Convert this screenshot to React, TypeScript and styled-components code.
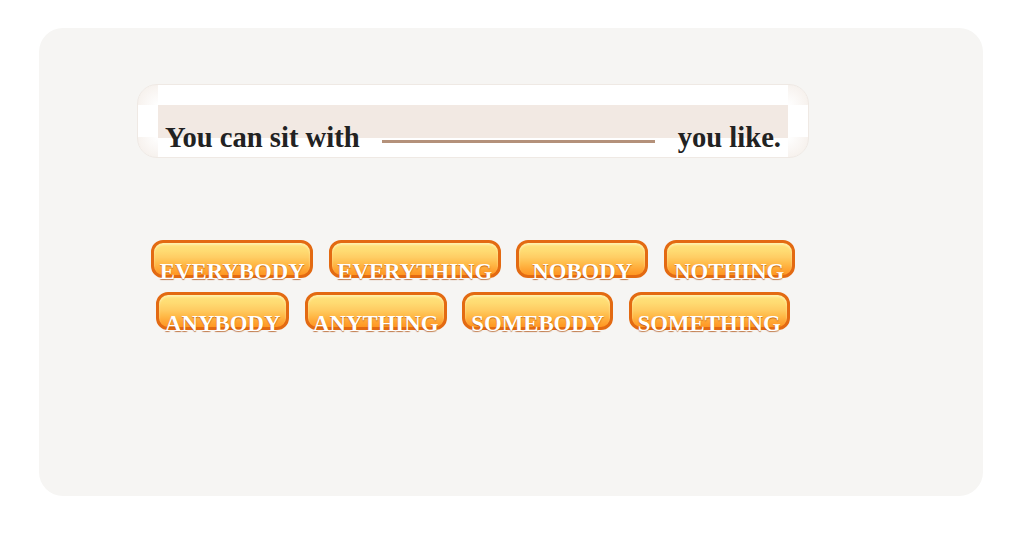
import React from 'react';
import styled, { createGlobalStyle } from 'styled-components';

const GlobalStyle = createGlobalStyle`
  html, body {
    margin: 0;
    padding: 0;
    background: #ffffff;
    font-family: "Liberation Serif", "Times New Roman", serif;
  }
`;

const Page = styled.div`
  padding: 28px 39px 50px 39px;
`;

const Card = styled.div`
  width: 944px;
  height: 468px;
  box-sizing: border-box;
  background: #f6f5f3;
  border-radius: 24px;
  padding: 56px 174px 0 98px;
`;

const Sentence = styled.div`
  width: 672px;
  height: 74px;
  box-sizing: border-box;
  border: 1px solid #efe9e4;
  border-radius: 20px;
  background-color: #ffffff;
  background-image:
    radial-gradient(circle at 100% 100%, #ffffff 0, #f7f2ee 20px, transparent 21px),
    radial-gradient(circle at 0 100%, #ffffff 0, #f7f2ee 20px, transparent 21px),
    radial-gradient(circle at 100% 0, #ffffff 0, #f7f2ee 20px, transparent 21px),
    radial-gradient(circle at 0 0, #ffffff 0, #f7f2ee 20px, transparent 21px),
    linear-gradient(#f2e9e3, #f2e9e3);
  background-repeat: no-repeat;
  background-position: 0 0, 100% 0, 0 100%, 100% 100%, 20px 20px;
  background-size: 20px 20px, 20px 20px, 20px 20px, 20px 20px, calc(100% - 40px) 33px;
  display: flex;
  align-items: flex-end;
  padding: 0 27px 5px 27px;
`;

const Words = styled.span`
  font-size: 28.6px;
  font-weight: bold;
  line-height: 28px;
  color: #222222;
  white-space: nowrap;
`;

const Blank = styled.span`
  flex: 1;
  height: 3px;
  background: #b4917a;
  margin: 0 23px 9px 22px;
`;

const Choices = styled.div`
  width: 672px;
  margin-top: 82px;
  display: flex;
  flex-wrap: wrap;
  justify-content: center;
  column-gap: 15.5px;
  row-gap: 14px;
`;

const Choice = styled.button<{ $width: number }>`
  width: ${(p) => p.$width}px;
  height: 38px;
  box-sizing: border-box;
  border: 3px solid #e36a12;
  border-radius: 12px;
  padding: 17px 0 0 0;
  margin: 0;
  background: linear-gradient(
    #ffe47e 0%,
    #ffdb72 25%,
    #ffcd64 45%,
    #ffbd4c 62%,
    #ffa432 85%,
    #ff9722 100%
  );
  box-shadow: inset 0 2px 2px rgba(255, 245, 190, 0.7);
  font-family: "Liberation Serif", "Times New Roman", serif;
  font-size: 22.8px;
  font-weight: bold;
  line-height: 23px;
  color: #ffffff;
  text-shadow: 0 1px 1px rgba(170, 70, 0, 0.7);
  display: flex;
  justify-content: center;
  align-items: flex-start;
  white-space: nowrap;
  overflow: visible;
  cursor: pointer;
`;

const options = [
  { word: 'EVERYBODY', width: 162 },
  { word: 'EVERYTHING', width: 172 },
  { word: 'NOBODY', width: 132 },
  { word: 'NOTHING', width: 131 },
  { word: 'ANYBODY', width: 133 },
  { word: 'ANYTHING', width: 142 },
  { word: 'SOMEBODY', width: 151 },
  { word: 'SOMETHING', width: 161 },
];

function App() {
  return (
    <>
      <GlobalStyle />
      <Page>
        <Card>
          <Sentence>
            <Words>You can sit with</Words>
            <Blank />
            <Words>you like.</Words>
          </Sentence>
          <Choices>
            {options.map((o) => (
              <Choice key={o.word} $width={o.width}>
                {o.word}
              </Choice>
            ))}
          </Choices>
        </Card>
      </Page>
    </>
  );
}

export default App;
